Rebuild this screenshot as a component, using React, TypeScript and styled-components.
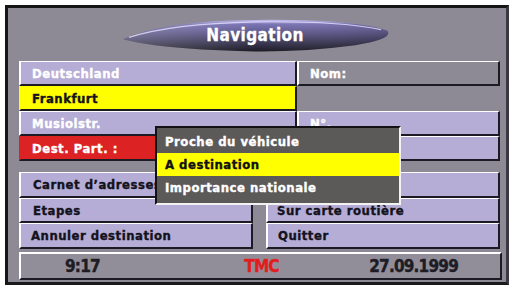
import React from 'react'
import styled, { createGlobalStyle } from 'styled-components'

const GlobalStyle = createGlobalStyle`
    html, body {
        margin: 0;
        padding: 0;
        background: #ffffff;
    }
    body {
        font-family: 'DejaVu Sans Condensed', 'DejaVu Sans', sans-serif;
        font-weight: bold;
    }
`

type Tone = 'lavender' | 'yellow' | 'red' | 'gray'

const toneColors: Record<Tone, string> = {
    lavender: '#b5add5',
    yellow: '#ffff00',
    red: '#dc2222',
    gray: '#8e8a95'
}

const MENU_ITEMS = ['Proche du véhicule', 'A destination', 'Importance nationale']

export default function App() {
    return (
        <>
            <GlobalStyle />
            <Screen>
                <Panel>
                    <Header>
                        <Pill viewBox="0 0 272 36" preserveAspectRatio="none">
                            <defs>
                                <linearGradient id="pillFill" x1="0" y1="0" x2="0" y2="1">
                                    <stop offset="0" stopColor="#c4bdf0" />
                                    <stop offset="0.14" stopColor="#7a74b4" />
                                    <stop offset="0.5" stopColor="#55507c" />
                                    <stop offset="1" stopColor="#1c1b24" />
                                </linearGradient>
                                <linearGradient id="pillShade" x1="0" y1="0" x2="1" y2="0">
                                    <stop offset="0" stopColor="#ffffff" stopOpacity="0.2" />
                                    <stop offset="0.5" stopColor="#ffffff" stopOpacity="0" />
                                    <stop offset="1" stopColor="#000000" stopOpacity="0.1" />
                                </linearGradient>
                            </defs>
                            <path
                                d="M2 23 Q40 4 136 3 Q236 2 268 14 Q276 22 236 29 Q176 37 118 35 Q40 33 2 23 Z"
                                fill="url(#pillFill)"
                            />
                            <path
                                d="M2 23 Q40 4 136 3 Q236 2 268 14 Q276 22 236 29 Q176 37 118 35 Q40 33 2 23 Z"
                                fill="url(#pillShade)"
                            />
                            <path
                                d="M8 21 Q50 7 136 5 Q220 4 262 13"
                                fill="none"
                                stroke="#e6e2ff"
                                strokeWidth="1.2"
                                strokeOpacity="0.8"
                            />
                        </Pill>
                        <Title>Navigation</Title>
                    </Header>

                    <AddressGrid>
                        <Field $tone="lavender" $light>Deutschland</Field>
                        <Field $tone="gray" $light>Nom:</Field>
                        <Field $tone="yellow" $flat>Frankfurt</Field>
                        <Blank />
                        <Field $tone="lavender" $light>Musiolstr.</Field>
                        <Field $tone="lavender" $light>N°.</Field>
                        <Field $tone="red" $light $flat>Dest. Part. :</Field>
                        <Field $tone="lavender" />
                    </AddressGrid>

                    <ActionGrid>
                        <Field $tone="lavender" $indent={12}>Carnet d’adresses</Field>
                        <Field $tone="lavender" />
                        <Field $tone="lavender" $indent={12}>Etapes</Field>
                        <Field $tone="lavender" $indent={9}>Sur carte routière</Field>
                        <Field $tone="lavender" $indent={10}>Annuler destination</Field>
                        <Field $tone="lavender" $indent={10}>Quitter</Field>
                    </ActionGrid>

                    <StatusBar>
                        <Clock>9:17</Clock>
                        <Tmc>TMC</Tmc>
                        <DateText>27.09.1999</DateText>
                    </StatusBar>

                    <Menu>
                        {MENU_ITEMS.map((item, i) => (
                            <MenuItem key={item} $active={i === 1}>
                                {item}
                            </MenuItem>
                        ))}
                    </Menu>
                </Panel>
            </Screen>
        </>
    )
}

const Screen = styled.div`
    width: 512px;
    height: 289px;
    padding: 5px 0 0 5px;
    box-sizing: border-box;
    background: #ffffff;
`
const Panel = styled.div`
    position: relative;
    width: 504px;
    height: 280px;
    box-sizing: border-box;
    background: #8e8a95;
    border-top: 3px solid #151515;
    border-left: 3px solid #151515;
    border-right: 3px solid #3a3840;
    border-bottom: 3px solid #1a1a1a;
    padding: 9px 6px 0 11px;
    display: flex;
    flex-direction: column;
`
const Header = styled.div`
    position: relative;
    height: 35px;
    display: flex;
    align-items: center;
    justify-content: center;
    margin-bottom: 9px;
`
const Pill = styled.svg`
    position: absolute;
    left: 102px;
    top: 0;
    width: 270px;
    height: 35px;
`
const Title = styled.div`
    position: relative;
    color: #ffffff;
    font-size: 17px;
    letter-spacing: 0.4px;
    margin-right: 9px;
    margin-top: 1px;
    -webkit-text-stroke: 0.3px #ffffff;
`
const AddressGrid = styled.div`
    display: grid;
    grid-template-columns: 278px 203px;
    grid-auto-rows: 25px;
`
const ActionGrid = styled.div`
    display: grid;
    grid-template-columns: 234px 234px;
    column-gap: 13px;
    grid-auto-rows: 25.5px;
    margin-top: 11px;
`
const Field = styled.div<{
    $tone: Tone
    $light?: boolean
    $flat?: boolean
    $indent?: number
}>`
    box-sizing: border-box;
    display: flex;
    align-items: center;
    background: ${(p) => toneColors[p.$tone]};
    color: ${(p) => (p.$light ? '#ffffff' : '#14121c')};
    font-size: 13px;
    letter-spacing: 0.5px;
    -webkit-text-stroke: 0.35px currentColor;
    padding-left: ${(p) => p.$indent ?? 11}px;
    padding-top: 1px;
    border-top: 1px solid ${(p) => (p.$flat ? toneColors[p.$tone] : '#ffffff')};
    border-left: 2px solid ${(p) => (p.$flat ? toneColors[p.$tone] : '#ffffff')};
    border-right: 2px solid #1c1a22;
    border-bottom: 2px solid #1c1a22;
    white-space: nowrap;
    overflow: hidden;
`
const Blank = styled.div``
const StatusBar = styled.div`
    box-sizing: border-box;
    margin-top: 3px;
    width: 483px;
    height: 28px;
    display: grid;
    grid-template-columns: 1fr auto 1fr;
    align-items: center;
    background: #928e99;
    border-top: 2px solid #ffffff;
    border-left: 2px solid #ffffff;
    border-right: 2px solid #1c1a22;
    border-bottom: 2px solid #1c1a22;
    font-size: 17px;
    letter-spacing: -0.8px;
    -webkit-text-stroke: 0.4px currentColor;
`
const Clock = styled.span`
    justify-self: start;
    padding-left: 44px;
    color: #1e1c24;
`
const Tmc = styled.span`
    color: #e01e1e;
    margin-left: 2px;
`
const DateText = styled.span`
    justify-self: end;
    padding-right: 42px;
    color: #1e1c24;
`
const Menu = styled.div`
    position: absolute;
    left: 147px;
    top: 118px;
    width: 246px;
    box-sizing: border-box;
    background: #5c5a59;
    border-top: 2px solid #121212;
    border-left: 2px solid #121212;
    border-right: 2px solid #f2f2f2;
    border-bottom: 2px solid #f2f2f2;
    padding: 2px 0 4px;
    z-index: 2;
`
const MenuItem = styled.div<{ $active: boolean }>`
    height: 23px;
    display: flex;
    align-items: center;
    padding-left: 8px;
    font-size: 13px;
    letter-spacing: 0.5px;
    -webkit-text-stroke: 0.35px currentColor;
    background: ${(p) => (p.$active ? '#ffff00' : 'transparent')};
    color: ${(p) => (p.$active ? '#111111' : '#ffffff')};
`
